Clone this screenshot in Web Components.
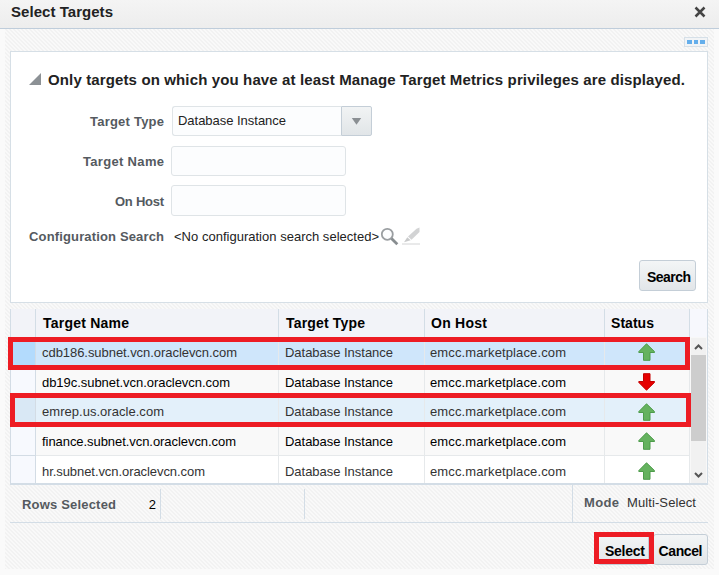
<!DOCTYPE html>
<html lang="en">
<head>
<meta charset="utf-8">
<title>Select Targets</title>
<style>
html,body{margin:0;height:100%;overflow:hidden;background:#fafafa;font:13px/16px "Liberation Sans",Arial,sans-serif;color:#333}
</style>
</head>
<body>
<target-dialog></target-dialog>
<script>
class BaseElement extends HTMLElement{
  constructor(){super();this.attachShadow({mode:'open'});}
  paint(html){this.shadowRoot.innerHTML=html;}
}

/* Single-line text tracked to a given width. */
customElements.define('fit-text',class extends BaseElement{
  connectedCallback(){
    this.paint('<style>:host{display:inline-block;white-space:pre;flex:none}</style><span><slot></slot></span>');
    const s=this.shadowRoot.querySelector('span');
    const w=parseFloat(this.getAttribute('w'));
    const n=this.textContent.length;
    if(w){
      const d=(w-s.getBoundingClientRect().width)/(n-1);
      s.style.letterSpacing=d+'px';
      s.style.marginRight=-d+'px';
    }
  }
});

customElements.define('status-arrow',class extends BaseElement{
  connectedCallback(){
    const down=this.hasAttribute('down');
    this.paint(`<style>:host{display:block;width:18px;height:18px}svg{display:block}</style>
    <svg width="18" height="18" viewBox="0 0 18 18"><path ${down?'transform="matrix(1 0 0 -1 0 18)"':''} d="M8.5 .8 16.5 8.6V9.5H12V17.3H5.5V9.5H.8V8.6Z" fill="${down?'#e60000':'#65b25f'}" stroke="${down?'#c40000':'#4d9c4a'}" stroke-width="1"/></svg>`);
  }
});

customElements.define('push-button',class extends BaseElement{
  connectedCallback(){
    this.paint(`<style>:host{display:flex;box-sizing:border-box;height:31px;align-items:center;justify-content:center;border:1px solid #c4ced7;border-radius:3px;background:linear-gradient(#f3f5f6,#e2e6e9);color:#000;font-size:14px;font-weight:bold;padding-top:2px}</style><slot></slot>`);
  }
});

customElements.define('form-row',class extends BaseElement{
  connectedCallback(){
    this.paint(`<style>:host{display:grid;grid-template-columns:153px 1fr;column-gap:7px;align-items:center}
    .l{justify-self:end;font-weight:bold;color:#555a5f;padding-top:2px}.v{display:flex;align-items:center;color:#222}</style>
    <div class="l"><slot name="label"></slot></div><div class="v"><slot></slot></div>`);
  }
});

customElements.define('text-box',class extends BaseElement{
  connectedCallback(){
    this.paint('<style>:host{display:block;box-sizing:border-box;width:175px;height:30px;border:1px solid #dfe4e7;border-radius:3px;background:#fcfdfe}</style>');
  }
});

customElements.define('drop-list',class extends BaseElement{
  connectedCallback(){
    this.paint(`<style>:host{display:flex;box-sizing:border-box;width:200px;height:30px;margin-left:1px}
    .t{box-sizing:border-box;width:169px;border:1px solid #dfe4e7;border-right:0;border-radius:3px 0 0 3px;background:#fcfdfe;padding:6px 0 0 5px}
    .b{box-sizing:border-box;width:31px;border:1px solid #c4ced7;border-radius:0 2px 2px 0;background:linear-gradient(#f1f3f4,#e1e5e8);display:grid;place-items:center}</style>
    <div class="t"><slot></slot></div><div class="b"><svg width="11" height="8"><path d="M.8 1H10.2L5.5 7.8Z" fill="#8a8f93"/></svg></div>`);
  }
});

customElements.define('search-panel',class extends BaseElement{
  connectedCallback(){
    this.paint(`<style>:host{display:flex;flex-direction:column;box-sizing:border-box;height:252px;border:1px solid #d6dfe6;background:#fff;padding-right:11px}
    header{display:flex;align-items:center;gap:7px;height:18px;margin:19px 0 0 18px;font-size:15px;font-weight:bold;color:#222}
    header svg{margin-top:-3px}
    .f{display:flex;flex-direction:column;padding-top:17px}
    push-button{align-self:flex-end;width:57px;margin-top:13px;padding-left:3px}</style>
    <header><svg width="12" height="12"><path d="M0 12 12 0V12Z" fill="#8c9195"/></svg><fit-text w="637">Only targets on which you have at least Manage Target Metrics privileges are displayed.</fit-text></header>
    <div class="f">
      <form-row style="height:30px"><fit-text slot="label" w="74">Target Type</fit-text><drop-list><fit-text w="108">Database Instance</fit-text></drop-list></form-row>
      <form-row style="margin-top:10px;height:30px"><fit-text slot="label" w="81">Target Name</fit-text><text-box></text-box></form-row>
      <form-row style="margin-top:9px;height:31px"><fit-text slot="label" w="49">On Host</fit-text><text-box style="height:31px"></text-box></form-row>
      <form-row style="margin-top:9px;height:22px"><fit-text slot="label" w="135">Configuration Search</fit-text><fit-text w="205" style="margin:2px 0 0 3px">&lt;No configuration search selected&gt;</fit-text>
        <span style="display:flex;gap:3px;margin-left:1px"><svg width="19" height="19"><circle cx="7.3" cy="7.3" r="5.5" fill="#fcfdfe" stroke="#9a9ea1" stroke-width="1.8"/><path d="M11.5 11.5 17.3 17.3" stroke="#888d90" stroke-width="2.8"/></svg><svg width="19" height="19"><path d="M0 17H18" stroke="#d3d4d5"/><path d="M17.5.5V5L9.5 12.8 6 9.5 14.5 1.8Z" fill="#d2d3d4"/><path d="M5.3 10.2 8.6 13.3 2 15.2Z" fill="#c9cacb"/></svg></span></form-row>
    </div>
    <push-button><fit-text w="44">Search</fit-text></push-button>`);
  }
});

customElements.define('target-row',class extends BaseElement{
  connectedCallback(){
    this.paint(`<style>:host{display:grid;grid-template-columns:26px 243px 146px 180px 85px;box-sizing:border-box;background:var(--bg,#fff);color:var(--fg,#333)}
    div{box-sizing:border-box;border-right:1px solid #e6e9eb;border-bottom:1px solid #e6e9eb;padding:var(--pt,8px) 0 0 6px;overflow:hidden}
    .s{background:var(--sel,#f7f9fe);border-color:#d3dce5;border-left:1px solid #d3dce5}
    .a{padding:6px 0 0 33px}:host([last]) div{border-bottom:0}</style>
    <div class="s"></div><div><slot name="name"></slot></div><div><fit-text w="108">Database Instance</fit-text></div><div style="padding-left:5px"><fit-text w="136">emcc.marketplace.com</fit-text></div><div class="a"><slot name="status"></slot></div>`);
  }
});

customElements.define('target-table',class extends BaseElement{
  connectedCallback(){
    const data=[
      ['cdb186.subnet.vcn.oraclevcn.com',195,30,'--bg:#cfe6fb;--sel:#b3dbfd',0],
      ['db19c.subnet.vcn.oraclevcn.com',188,30,'--bg:#f9f9f9;--fg:#000',1],
      ['emrep.us.oracle.com',122,29,'--bg:#e3f0fa;--sel:#d9e8f5;--pt:7px',0],
      ['finance.subnet.vcn.oraclevcn.com',194,30,'--bg:#f9f9f9;--fg:#000',0],
      ['hr.subnet.vcn.oraclevcn.com',163,27,'',0]];
    this.paint(`<style>:host{display:block;position:relative;box-sizing:border-box;height:176px;margin-top:6px;border-bottom:2px solid #d3dde6;background:#f9f9f9}
    .h{display:grid;grid-template-columns:26px 243px 146px 180px 85px 18px;height:28px;background:#f2f3f8;color:#000;font-size:14px;font-weight:bold}
    .h div{box-sizing:border-box;border-right:1px solid #d3dde6;padding:6px 0 0 7px}
    .h div:first-child{border-left:1px solid #d3dde6}.h div:last-child{background:#f7f8fd}
    .b{display:flex;height:146px}.rows{width:680px}
    .sb{box-sizing:border-box;width:18px;border-right:1px solid #d3dde6;padding:1px 1px 0;background:#f8f8f8;display:flex;flex-direction:column}
    .sb svg{background:#f1f1f1;display:block}.th{height:86px;background:#cdcdcd}.tr{height:27px;background:#f1f1f1}
    .m{position:absolute;box-sizing:border-box;border:5px solid #ed1c24}</style>
    <div class="h"><div></div><div><fit-text w="86">Target Name</fit-text></div><div><fit-text w="79">Target Type</fit-text></div><div style="padding-left:6px"><fit-text w="56">On Host</fit-text></div><div style="padding-left:6px"><fit-text w="43">Status</fit-text></div><div></div></div>
    <div class="b"><div class="rows">${data.map((r,i)=>`<target-row style="height:${r[2]}px;${r[3]}" ${i==4?'last':''}><fit-text slot="name" w="${r[1]}">${r[0]}</fit-text><status-arrow slot="status" ${r[4]?'down':''}></status-arrow></target-row>`).join('')}</div>
    <div class="sb"><svg width="15" height="17"><path d="M4 11 7.5 7.5 11 11" fill="none" stroke="#555" stroke-width="2"/></svg><div class="th"></div><div class="tr"></div><svg width="15" height="15"><path d="M4 5 7.5 8.5 11 5" fill="none" stroke="#555" stroke-width="2"/></svg></div></div>
    <div class="m" style="left:-2px;top:28px;width:682px;height:33px"></div>
    <div class="m" style="left:0;top:84px;width:681px;height:34px"></div>`);
  }
});

customElements.define('table-footer',class extends BaseElement{
  connectedCallback(){
    this.paint(`<style>:host{display:flex;box-sizing:border-box;height:38px;border-bottom:1px solid #d3dde6}
    b{color:#555a5f}.a,.c{box-sizing:border-box;height:30px;margin-top:4px;border-right:1px solid #d3dde6}
    .a{width:151px;display:flex;justify-content:space-between;padding:8px 4px 0 12px;color:#000}.c{width:144px}
    .d{display:flex;gap:8px;box-sizing:border-box;margin-left:267px;width:136px;border-left:1px solid #d3dde6;padding:10px 0 0 11px}</style>
    <div class="a"><b><fit-text w="94">Rows Selected</fit-text></b><span>2</span></div><div class="c"></div>
    <div class="d"><b><fit-text w="35">Mode</fit-text></b><fit-text w="69">Multi-Select</fit-text></div>`);
  }
});

customElements.define('target-dialog',class extends BaseElement{
  connectedCallback(){
    this.paint(`<style>:host{display:block;width:719px;height:575px;background:#fafafa}
    header{display:flex;justify-content:space-between;box-sizing:border-box;height:29px;padding:4px 13px 0 11px;border-bottom:1px solid #bfcddb;background:linear-gradient(#f4f4f4,#ededed);font-size:15px;font-weight:bold;color:#222}
    header svg{margin-top:2px}
    main{box-sizing:border-box;height:540px;margin:0 5px;padding:8px 6px 0 5px;background:linear-gradient(45deg,#f2f2f2 12.5%,#f9f9f9 12.5% 37.5%,#f2f2f2 37.5% 62.5%,#f9f9f9 62.5% 87.5%,#f2f2f2 87.5%) 0 0/4px 4px}
    .tools{display:flex;justify-content:flex-end;height:14px}
    .more{box-sizing:border-box;width:24px;height:10px;border:1px solid #d6e0e8;background:#f2f4f6;display:flex;justify-content:center;align-items:center;gap:2px}
    .more i{width:4.5px;height:4px;background:#64aeeb}
    .actions{display:flex;justify-content:flex-end;gap:4px;padding-top:11px}
    .pick{position:relative}.mark{position:absolute;box-sizing:border-box;left:-3px;top:-2px;width:60px;height:32px;border:5px solid #ed1c24}</style>
    <header><fit-text w="102">Select Targets</fit-text><svg width="12" height="12"><path d="M1.5 1.5 10.5 10.5M10.5 1.5 1.5 10.5" stroke="#444" stroke-width="2.5"/></svg></header>
    <main><div class="tools"><div class="more"><i></i><i></i><i></i></div></div>
    <search-panel></search-panel><target-table></target-table><table-footer></table-footer>
    <div class="actions"><div class="pick"><push-button style="width:52px;padding-left:4px"><fit-text w="40">Select</fit-text></push-button><div class="mark"></div></div><push-button style="width:55px"><fit-text w="44">Cancel</fit-text></push-button></div></main>`);
  }
});
</script>
</body>
</html>
